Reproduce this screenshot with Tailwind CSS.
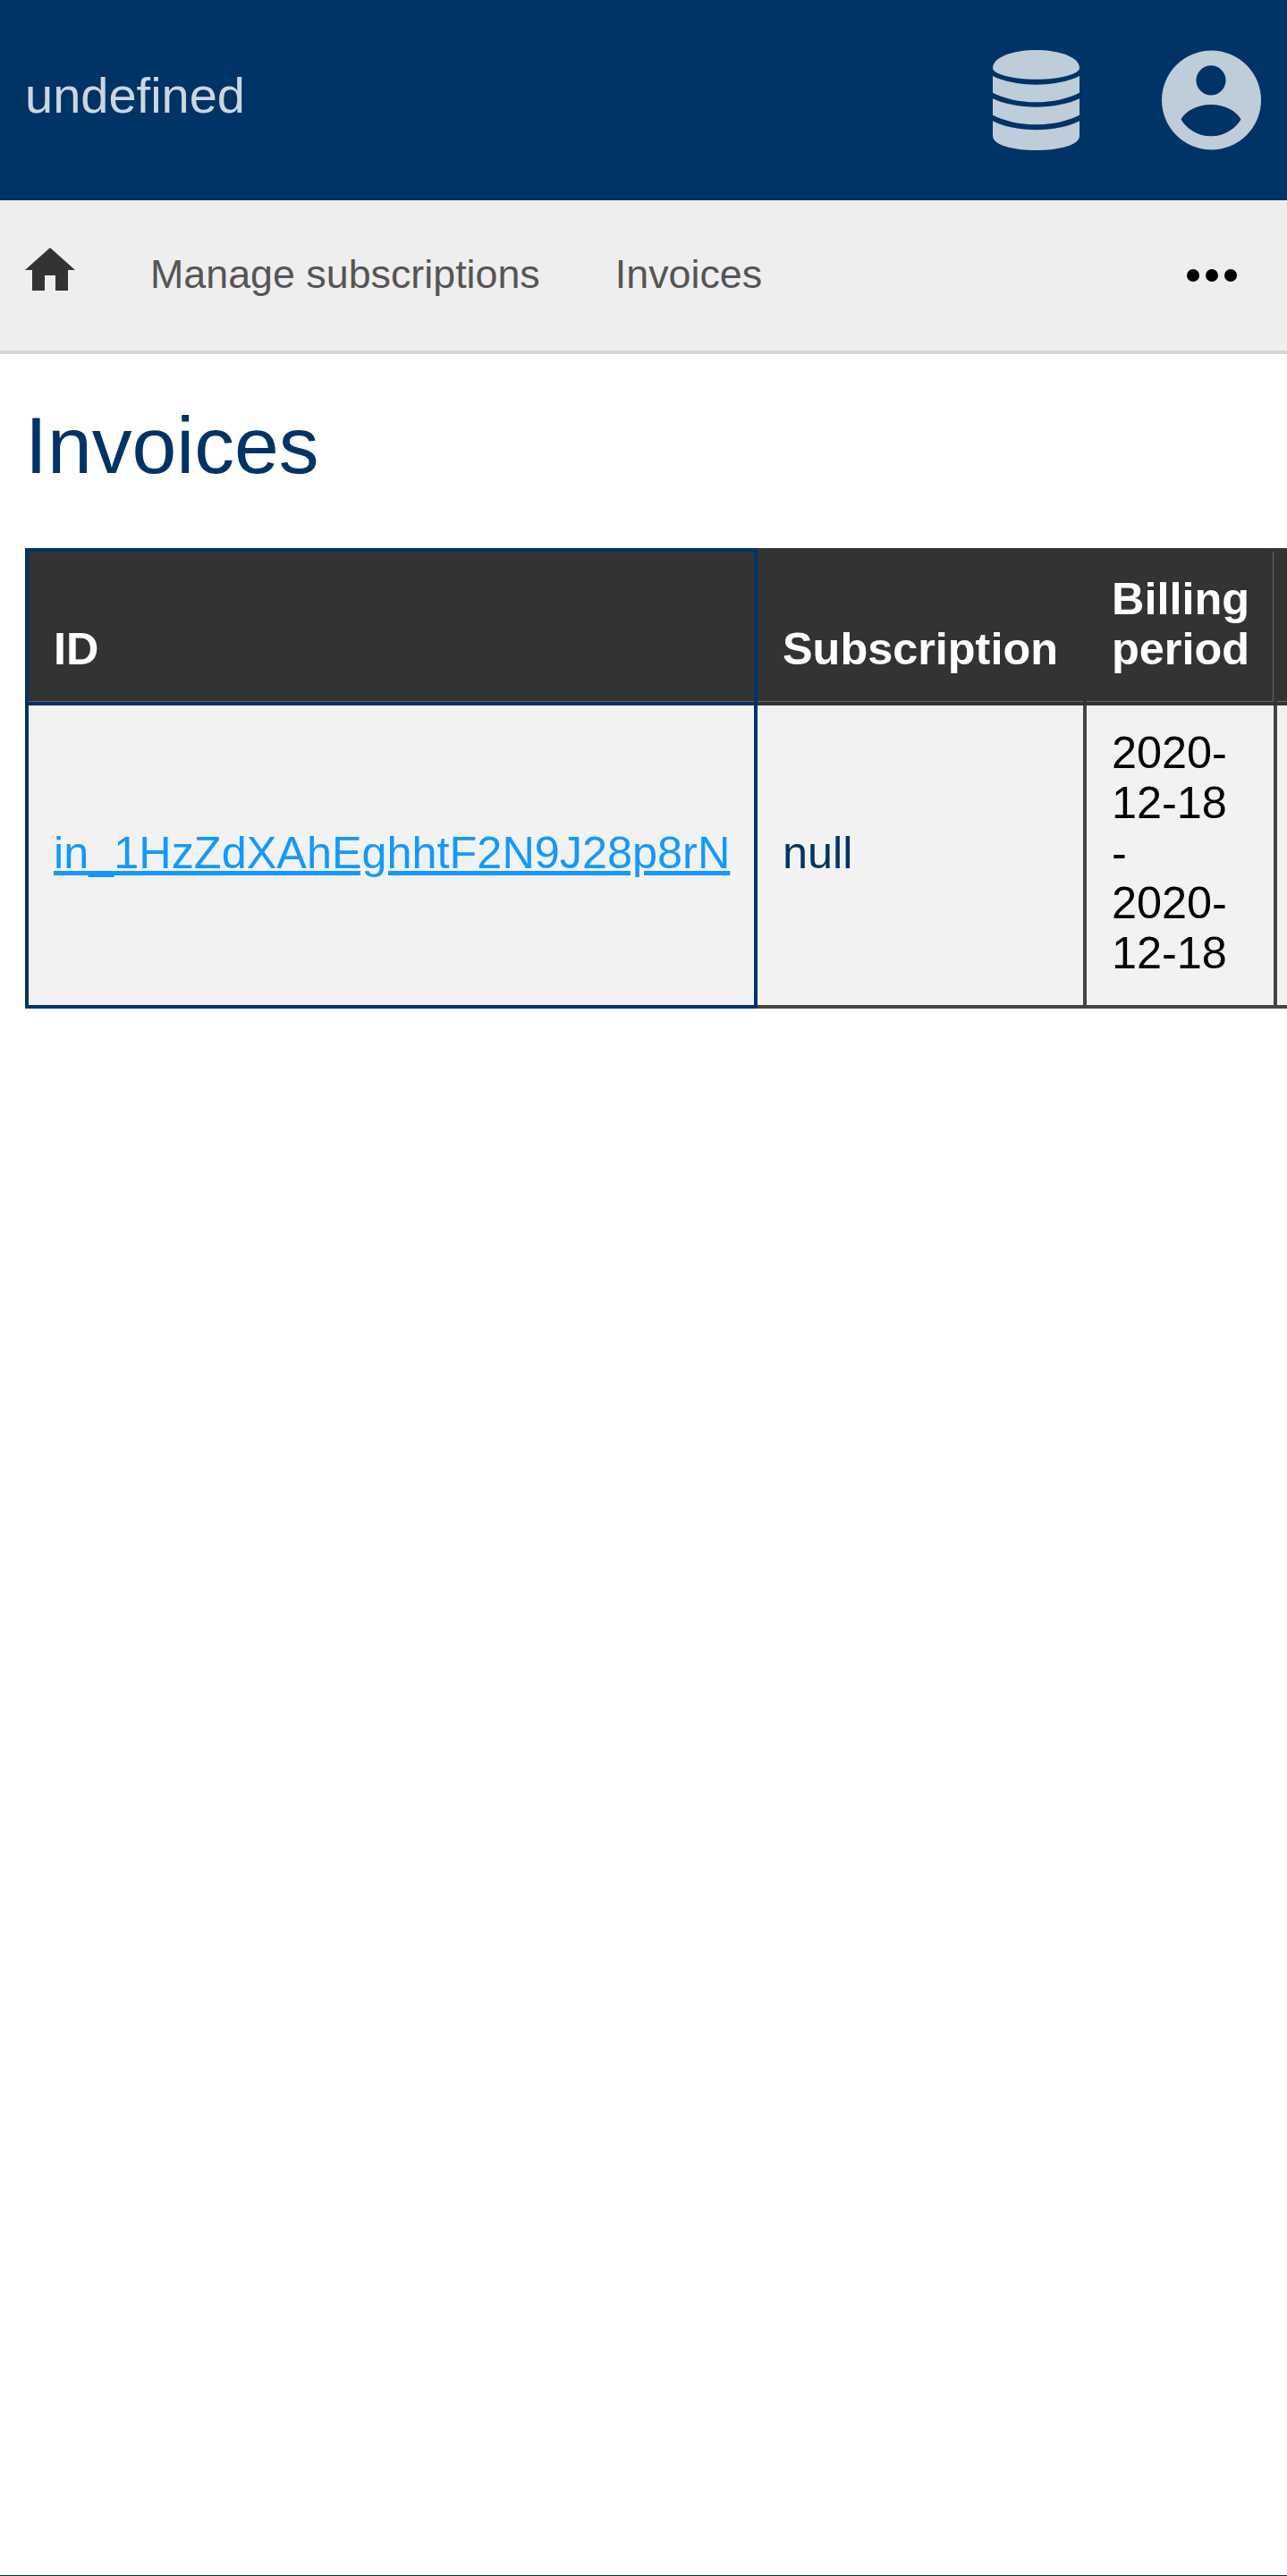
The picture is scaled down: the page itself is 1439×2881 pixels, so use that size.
<!DOCTYPE html>
<html lang="en">
<head>
  <meta charset="UTF-8" />
  <title>Invoices</title>
  <script src="https://cdn.jsdelivr.net/npm/@tailwindcss/browser@4"></script>
</head>
<body class="min-h-screen flex flex-col bg-white font-['Liberation_Sans',Arial,sans-serif] overflow-x-hidden">
  <!-- Header -->
  <header class="h-[224px] bg-[#003366] flex items-center pl-[28px] pr-[29px]">
    <div class="text-[56px] text-[#ccd6e0] leading-none -mt-[10px]">undefined</div>
    <svg class="ml-auto mr-[92px] w-[97px] h-[112px] text-[#bfccd9]" viewBox="0 0 97 112" fill="currentColor">
      <path d="M0 20C0 8 22 0 48.500 0S97 8 97 20C97 27 75 32.700 48.500 32.700S0 27 0 20Z" />
      <path d="M0 29C12 35 30 38.700 48.500 38.700S85 35 97 29V47.700C85 54 67 58.300 48.500 58.300S12 54 0 47.700Z" />
      <path d="M0 54.300C12 60 30 63.700 48.500 63.700S85 60 97 54.300V72.700C85 79 67 83.300 48.500 83.300S12 79 0 72.700Z" />
      <path d="M0 79.300C12 85.500 30 89.300 48.500 89.300S85 85.500 97 79.300V96C97 106 75 112 48.500 112S0 106 0 96Z" />
    </svg>
    <svg class="w-[111px] h-[112px] text-[#bfccd9]" viewBox="0 0 112 112" fill="currentColor">
      <path fill-rule="evenodd" d="M56 0A56 56 0 1 1 56 112A56 56 0 1 1 56 0ZM55.500 17A16.700 16.700 0 1 0 55.500 50.400A16.700 16.700 0 1 0 55.500 17ZM21.700 77.700C27 68 40 61 55.500 61C71 61 84 68 89.300 77.700C84 87 72 96.700 55.500 96.700C39 96.700 27 87 21.700 77.700Z" />
    </svg>
  </header>

  <!-- Nav -->
  <nav class="h-[172px] bg-[#eeeeee] border-b-4 border-[#d4d4d4] flex items-center pl-[28px] pr-[28px] text-[44.8px] text-[#555555]">
    <svg class="w-[56px] h-[48px] -mt-[14px] text-[#333333]" viewBox="0 0 56 48" fill="currentColor">
      <path d="M28 0L56 25H48V48H34V31H22V48H8V25H0Z" />
    </svg>
    <a href="#" class="ml-[84px] -mt-[2px]">Manage subscriptions</a>
    <a href="#" class="ml-[84px] -mt-[2px]">Invoices</a>
    <div class="ml-auto mr-[28px] flex gap-[7px]">
      <span class="w-[14px] h-[14px] rounded-full bg-black"></span>
      <span class="w-[14px] h-[14px] rounded-full bg-black"></span>
      <span class="w-[14px] h-[14px] rounded-full bg-black"></span>
    </div>
  </nav>

  <!-- Main content -->
  <main class="flex-1 pl-[28px] border-b border-[#003366] overflow-hidden">
    <h1 class="text-[89.6px] text-[#003366] leading-none mt-[58px] mb-[69px]">Invoices</h1>
    <table class="border-collapse text-[50.4px] leading-[56px] w-[1600px] table-fixed">
      <thead>
        <tr class="bg-[#333333] text-white font-bold align-bottom text-left">
          <th class="w-[815px] px-[28px] pt-[25px] pb-[31px] border-4 border-[#003366] shadow-[inset_0_-1px_0_#666666]">ID</th>
          <th class="w-[368px] px-[28px] pt-[25px] pb-[31px] border-4 border-[#333333] shadow-[inset_0_-1px_0_#666666]">Subscription</th>
          <th class="w-[213px] px-[28px] pt-[25px] pb-[31px] border-4 border-[#333333] shadow-[inset_-1px_-1px_0_#666666]">Billing period</th>
          <th class="px-[28px] pt-[25px] pb-[31px] border-4 border-[#333333] shadow-[inset_0_-1px_0_#666666]"></th>
        </tr>
      </thead>
      <tbody>
        <tr class="bg-[#f2f2f2] text-left">
          <td class="px-[28px] pt-[25px] pb-[30px] border-4 border-[#003366]"><a href="#" class="underline text-[#1199ff]">in_1HzZdXAhEghhtF2N9J28p8rN</a></td>
          <td class="px-[28px] pt-[25px] pb-[30px] border-4 border-[#444444] text-[#003366]">null</td>
          <td class="px-[28px] pt-[25px] pb-[30px] border-4 border-[#444444] text-black">2020-12-18 - 2020-12-18</td>
          <td class="px-[28px] pt-[25px] pb-[30px] border-4 border-[#444444]"></td>
        </tr>
      </tbody>
    </table>
  </main>
</body>
</html>
